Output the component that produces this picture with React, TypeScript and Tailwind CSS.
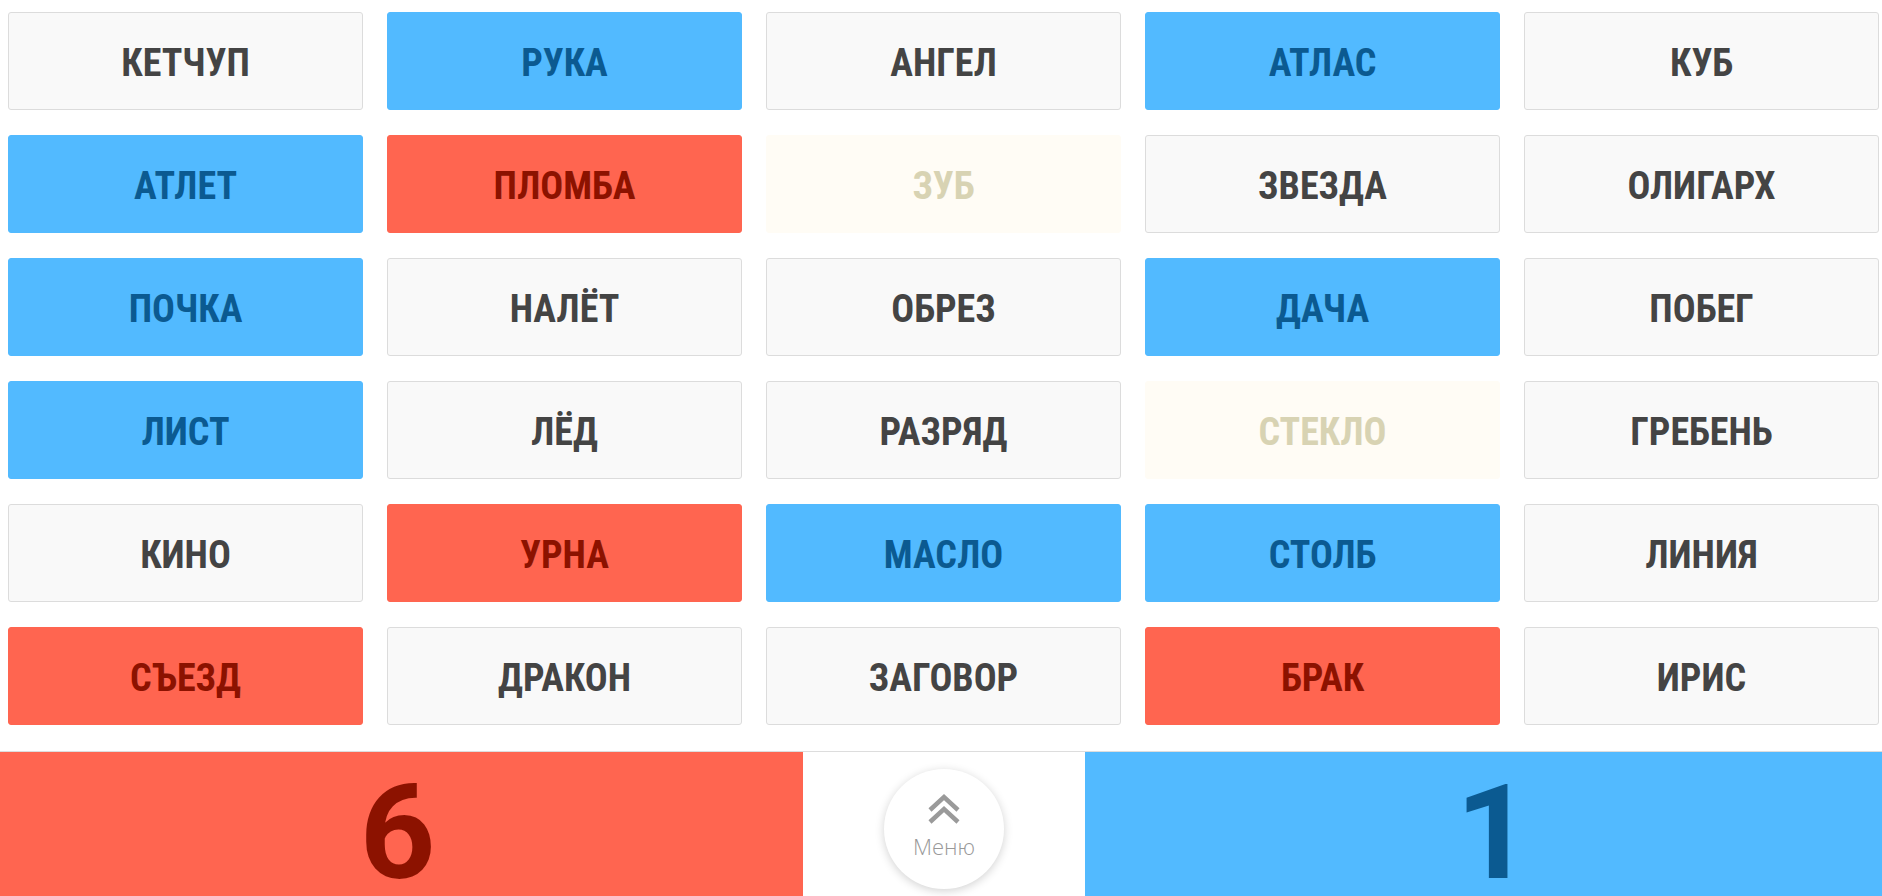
type Kind = "neutral" | "blue" | "red" | "beige";

const words: [string, Kind][] = [
  ["КЕТЧУП", "neutral"],
  ["РУКА", "blue"],
  ["АНГЕЛ", "neutral"],
  ["АТЛАС", "blue"],
  ["КУБ", "neutral"],
  ["АТЛЕТ", "blue"],
  ["ПЛОМБА", "red"],
  ["ЗУБ", "beige"],
  ["ЗВЕЗДА", "neutral"],
  ["ОЛИГАРХ", "neutral"],
  ["ПОЧКА", "blue"],
  ["НАЛЁТ", "neutral"],
  ["ОБРЕЗ", "neutral"],
  ["ДАЧА", "blue"],
  ["ПОБЕГ", "neutral"],
  ["ЛИСТ", "blue"],
  ["ЛЁД", "neutral"],
  ["РАЗРЯД", "neutral"],
  ["СТЕКЛО", "beige"],
  ["ГРЕБЕНЬ", "neutral"],
  ["КИНО", "neutral"],
  ["УРНА", "red"],
  ["МАСЛО", "blue"],
  ["СТОЛБ", "blue"],
  ["ЛИНИЯ", "neutral"],
  ["СЪЕЗД", "red"],
  ["ДРАКОН", "neutral"],
  ["ЗАГОВОР", "neutral"],
  ["БРАК", "red"],
  ["ИРИС", "neutral"],
];

const cardStyles: Record<Kind, string> = {
  neutral: "bg-[#f9f9f9] border-[#dcdcdc] text-[#444444]",
  blue: "bg-[#52baff] border-[#52baff] text-[#0b5a91]",
  red: "bg-[#ff6550] border-[#ff6550] text-[#8c1200]",
  beige: "bg-[#fffcf5] border-[#fffcf5] text-[#d8d3b3]",
};

const WordCard = ({ word, kind }: { word: string; kind: Kind }) => (
  <div
    className={`h-[98px] rounded-[3px] border flex items-center justify-center ${cardStyles[kind]}`}
  >
    <span className="font-['Roboto_Condensed','Roboto',sans-serif] [font-stretch:75%] font-bold text-[38px] leading-none uppercase pt-[3px]">
      {word}
    </span>
  </div>
);

const ChevronsUp = () => (
  <svg width="34" height="32" viewBox="0 0 34 32" fill="none">
    <polyline points="3,17 17,4 31,17" stroke="#9a9a9a" strokeWidth="4.5" />
    <polyline points="3,29 17,16 31,29" stroke="#9a9a9a" strokeWidth="4.5" />
  </svg>
);

export default function App() {
  return (
    <div className="w-[1882px] h-[896px] bg-white flex flex-col overflow-hidden">
      <div className="grid grid-cols-5 gap-x-6 gap-y-[25px] pl-[8px] pr-[3px] pt-3">
        {words.map(([w, k], i) => (
          <WordCard key={i} word={w} kind={k} />
        ))}
      </div>
      <div className="mt-auto h-[145px] border-t border-[#dddddd] flex">
        <div className="w-[803px] bg-[#ff6550] flex items-start justify-center pt-[26px] pr-[8px]">
          <span className="font-['Roboto',sans-serif] font-bold text-[132px] leading-[110px] text-[#8c1200]">
            6
          </span>
        </div>
        <div className="w-[282px] bg-white flex justify-center pt-[17px]">
          <button className="w-[120px] h-[120px] rounded-full bg-white shadow-[0_2px_10px_rgba(0,0,0,0.18)] flex flex-col items-center pt-[24px]">
            <ChevronsUp />
            <span className="font-['Open_Sans',sans-serif] font-light text-[22px] leading-none text-[#999999] mt-[10px]">
              Меню
            </span>
          </button>
        </div>
        <div className="flex-1 bg-[#52baff] flex items-start justify-center pt-[26px] pl-[20px]">
          <span className="font-['Roboto',sans-serif] font-bold text-[132px] leading-[110px] text-[#0b5a91]">
            1
          </span>
        </div>
      </div>
    </div>
  );
}
